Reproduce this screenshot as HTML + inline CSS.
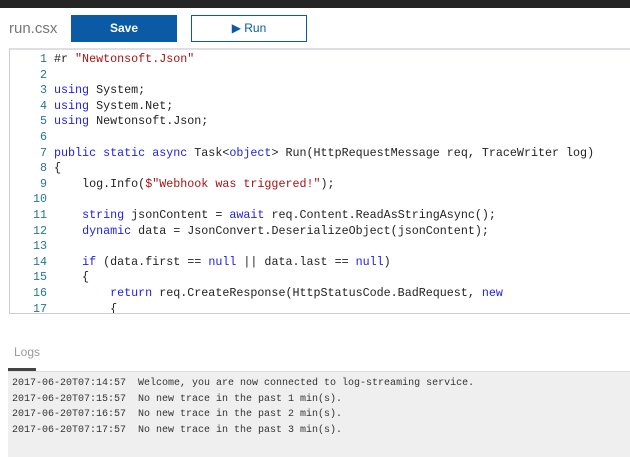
<!DOCTYPE html>
<html><head><meta charset="utf-8"><style>
body{margin:0;width:630px;height:456px;background:#fff;position:relative;overflow:hidden;font-family:"Liberation Sans",sans-serif}
.top{position:absolute;left:0;top:0;width:630px;height:8px;background:#252525}
.title{position:absolute;left:9px;top:20px;font-size:15px;color:#777}
.save{position:absolute;left:71px;top:15px;width:106px;height:27px;background:#0b5aa6;color:#fff;font-size:12px;font-weight:bold;text-align:center;line-height:27px}
.run{position:absolute;left:191px;top:15px;width:114px;height:25px;border:1px solid #0b5aa6;color:#0b5aa6;font-size:12px;text-align:center;line-height:25px}
.ed{position:absolute;left:9px;top:48px;width:630px;height:263px;border-top:2px solid #dfdfe3;border-left:1px solid #ccc;border-bottom:1px solid #ccc;overflow:hidden;background:#fff}
.code{position:absolute;left:0;top:2px;font-family:"Liberation Mono",monospace;font-size:11.7px;line-height:15.6px;white-space:pre;color:#222}
.ln{display:inline-block;width:37px;text-align:right;color:#237893;margin-right:7px}
.k{color:#2222e0}.s{color:#a31515}
.logs{position:absolute;left:14px;top:345px;font-size:12px;color:#999}
.tab{position:absolute;left:8px;top:368px;width:28px;height:3px;background:#444}
.lg{position:absolute;left:8px;top:371px;width:622px;height:85px;background:#efefef;border-top:1px solid #ddd}
.lt{position:absolute;left:4px;top:4px;font-family:"Liberation Mono",monospace;font-size:10px;line-height:15.6px;white-space:pre;color:#333}
</style></head><body>
<div class="top"></div>
<div class="title">run.csx</div>
<div class="save">Save</div>
<div class="run">&#9654; Run</div>
<div class="ed"><div class="code"><span class="ln">1</span>#r <span class="s">"Newtonsoft.Json"</span>
<span class="ln">2</span>
<span class="ln">3</span><span class="k">using</span> System;
<span class="ln">4</span><span class="k">using</span> System.Net;
<span class="ln">5</span><span class="k">using</span> Newtonsoft.Json;
<span class="ln">6</span>
<span class="ln">7</span><span class="k">public static async</span> Task&lt;<span class="k">object</span>&gt; Run(HttpRequestMessage req, TraceWriter log)
<span class="ln">8</span>{
<span class="ln">9</span>    log.Info(<span class="s">$"Webhook was triggered!"</span>);
<span class="ln">10</span>
<span class="ln">11</span>    <span class="k">string</span> jsonContent = <span class="k">await</span> req.Content.ReadAsStringAsync();
<span class="ln">12</span>    <span class="k">dynamic</span> data = JsonConvert.DeserializeObject(jsonContent);
<span class="ln">13</span>
<span class="ln">14</span>    <span class="k">if</span> (data.first == <span class="k">null</span> || data.last == <span class="k">null</span>)
<span class="ln">15</span>    {
<span class="ln">16</span>        <span class="k">return</span> req.CreateResponse(HttpStatusCode.BadRequest, <span class="k">new</span>
<span class="ln">17</span>        {</div></div>
<div class="logs">Logs</div>
<div class="tab"></div>
<div class="lg"><div class="lt">2017-06-20T07:14:57  Welcome, you are now connected to log-streaming service.
2017-06-20T07:15:57  No new trace in the past 1 min(s).
2017-06-20T07:16:57  No new trace in the past 2 min(s).
2017-06-20T07:17:57  No new trace in the past 3 min(s).</div></div>
</body></html>
